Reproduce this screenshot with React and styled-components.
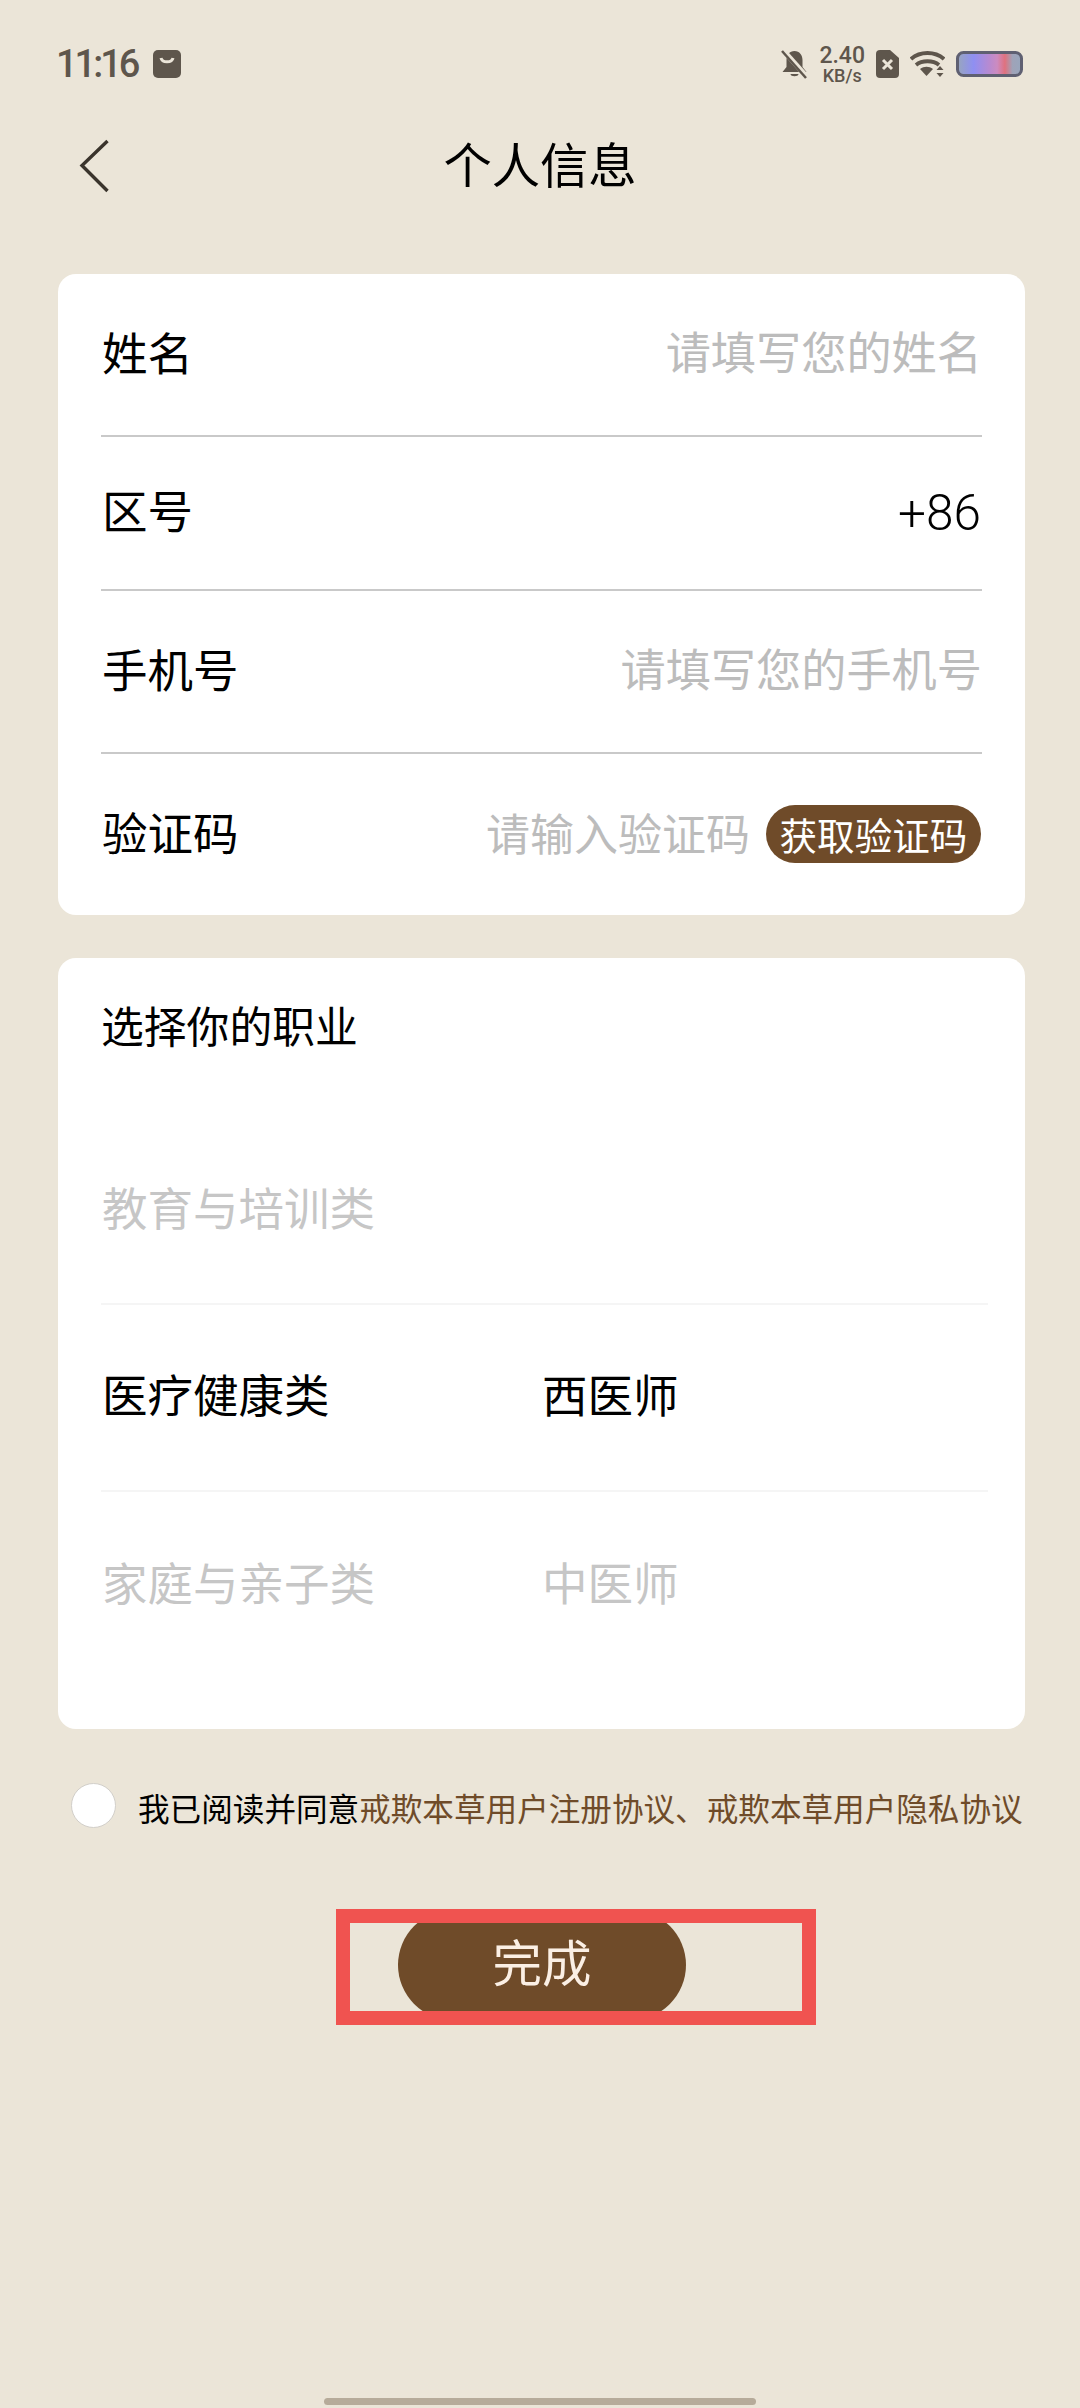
import React from "react";
import styled, { createGlobalStyle } from "styled-components";

const cjk = `"Noto Sans CJK SC", "Noto Sans", sans-serif`;

const GlobalStyle = createGlobalStyle`
  html, body {
    margin: 0;
    padding: 0;
    background: #ebe5d8;
    font-family: ${cjk};
  }
`;

const Page = styled.main`
  position: relative;
  width: 1080px;
  height: 2408px;
  overflow: hidden;
  background: #ebe5d8;
`;

const StatusBar = styled.header`
  height: 128px;
  box-sizing: border-box;
  padding: 0 57px 0 56px;
  display: flex;
  align-items: center;
  justify-content: space-between;
  color: #5e564c;
`;

const StatusGroup = styled.div`
  display: flex;
  align-items: center;
  gap: ${(p) => p.$gap || 16}px;
`;

const Clock = styled.span`
  font: 500 38px "Roboto", sans-serif;
  letter-spacing: -3px;
`;

const Speed = styled.span`
  display: flex;
  flex-direction: column;
  align-items: center;
  font: 500 23px/23px "Roboto", sans-serif;
  small {
    font-size: 18px;
    line-height: 18px;
  }
`;

const NavBar = styled.nav`
  position: relative;
  height: 74px;
  display: flex;
  align-items: center;
  justify-content: center;
  margin-bottom: 72px;
`;

const BackButton = styled.span`
  position: absolute;
  left: 79px;
  top: 11px;
  display: flex;
`;

const Title = styled.h1`
  margin: 0 0 6px;
  font-size: 48.3px;
  line-height: 68px;
  font-weight: 400;
  color: #000;
`;

const Card = styled.section`
  margin: 0 55px ${(p) => p.$bottom || 0}px 58px;
  background: #fff;
  border-radius: 18px;
  box-sizing: border-box;
  padding: 0 43px;
  height: ${(p) => p.$height}px;
`;

const FormRow = styled.div`
  height: ${(p) => p.$height}px;
  display: flex;
  align-items: center;
  justify-content: space-between;
  border-bottom: ${(p) => (p.$last ? "none" : "2px solid #c9c9c9")};
  box-sizing: border-box;
`;

const Label = styled.span`
  font-size: 45.5px;
  margin-bottom: 8px;
  margin-left: 1px;
  color: #000;
`;

const Value = styled.span`
  font-size: ${(p) => p.$size || 45.2}px;
  margin-bottom: ${(p) => (p.$size ? 5 : 8)}px;
  color: #bcbcbc;
`;

const AreaCode = styled.span`
  font: 300 49.5px "Roboto", sans-serif;
  margin-right: 1px;
  color: #000;
`;

const CodeField = styled.div`
  display: flex;
  align-items: center;
  gap: 16px;
`;

const CodeButton = styled.button`
  width: 215px;
  height: 58px;
  margin: 0 1px 2px 0;
  padding: 0;
  border: none;
  border-radius: 29px;
  background: #6f4b29;
  color: #fff;
  font: 400 37.6px/58px ${cjk};
`;

const SectionTitle = styled.h2`
  margin: 0;
  padding-top: 36px;
  height: 160px;
  box-sizing: border-box;
  font-size: 42.8px;
  line-height: 60px;
  font-weight: 400;
  color: #000;
`;

const JobRow = styled.div`
  height: 187px;
  display: grid;
  grid-template-columns: 440px 1fr;
  align-items: center;
  border-bottom: ${(p) => (p.$last ? "none" : "2px solid #f5f5f5")};
  box-sizing: border-box;
  margin-right: -6px;
`;

const JobText = styled.span`
  font-size: 45.5px;
  margin: 0 0 9px 1px;
  color: ${(p) => (p.$active ? "#000" : "#c6c6c6")};
`;

const Agreement = styled.div`
  display: flex;
  align-items: center;
  margin: 54px 0 0 71px;
  height: 44px;
`;

const Radio = styled.span`
  width: 45px;
  height: 45px;
  box-sizing: border-box;
  border-radius: 50%;
  border: 1px solid #d2cfca;
  background: #fff;
  margin-right: 22px;
  flex: none;
`;

const AgreementText = styled.span`
  font-size: 31.6px;
  line-height: 44px;
  padding-top: 3px;
  white-space: nowrap;
  color: #000;
  em {
    font-style: normal;
    color: #6f4b29;
  }
`;

const DoneButton = styled.button`
  display: block;
  width: 288px;
  height: 110px;
  margin: 83px 0 0 398px;
  padding: 0 0 8px;
  border: none;
  border-radius: 55px;
  background: #6f4b29;
  color: #fbefe4;
  font: 400 49.5px/100px ${cjk};
`;

/* annotation frame drawn over the screenshot */
const Highlight = styled.div`
  position: absolute;
  left: 336px;
  top: 1909px;
  width: 480px;
  height: 116px;
  box-sizing: border-box;
  border: 14px solid #f05350;
`;

const HomeBar = styled.div`
  position: absolute;
  left: 324px;
  bottom: 3px;
  width: 432px;
  height: 7px;
  border-radius: 4px;
  background: #b6ab9a;
`;

function BagIcon() {
  return (
    <svg width="28" height="28" viewBox="0 0 28 28">
      <rect width="28" height="28" rx="5" fill="#5e564c" />
      <path d="M8 8c1 5 11 5 12 0" fill="none" stroke="#ebe5d8" strokeWidth="3" />
    </svg>
  );
}

function BellOffIcon() {
  return (
    <svg width="27" height="30" viewBox="0 0 27 30">
      <path d="M13.5 2c5 0 8 4 8 9v7l4 5H1.5l4-5v-7c0-5 3-9 8-9zM9.5 25h8c0 3-8 3-8 0z" fill="#5e564c" />
      <path d="M2 1l24 27" stroke="#ebe5d8" strokeWidth="5" />
      <path d="M1 2l24 27" stroke="#5e564c" strokeWidth="2.5" />
    </svg>
  );
}

function SimIcon() {
  return (
    <svg width="23" height="28" viewBox="0 0 23 28">
      <path d="M4 0h10l9 8v16a4 4 0 0 1-4 4H4a4 4 0 0 1-4-4V4a4 4 0 0 1 4-4z" fill="#5e564c" />
      <path d="M7 10l9 9M16 10l-9 9" stroke="#ebe5d8" strokeWidth="3" />
    </svg>
  );
}

function WifiIcon() {
  return (
    <svg width="35" height="28" viewBox="0 0 35 28">
      <g fill="none" stroke="#5e564c" strokeWidth="3.8">
        <path d="M1 9c9-8 24-8 33 0" />
        <path d="M6 15c6-5 17-5 23 0" />
      </g>
      <path d="M10 19c4-3 9-3 13 0l-6.5 7z" fill="#5e564c" />
      <path d="M30 16l3.5 4h-7zM30 27l3.5-4h-7z" fill="#5e564c" />
    </svg>
  );
}

function BatteryIcon() {
  return (
    <svg width="67" height="26" viewBox="0 0 67 26">
      <defs>
        <linearGradient id="charge" x1="0" x2="1" y1="0" y2="0">
          <stop offset="0" stopColor="#98a6bd" />
          <stop offset="0.25" stopColor="#8f8ff2" />
          <stop offset="0.5" stopColor="#b88ad0" />
          <stop offset="0.62" stopColor="#cc8bc0" />
          <stop offset="0.74" stopColor="#e0717e" />
          <stop offset="0.86" stopColor="#9fa3b8" />
          <stop offset="1" stopColor="#98a6bd" />
        </linearGradient>
      </defs>
      <rect x="1.5" y="1.5" width="64" height="23" rx="6" fill="url(#charge)" stroke="#5f6072" strokeWidth="3" />
    </svg>
  );
}

function BackIcon() {
  return (
    <svg width="32" height="54" viewBox="0 0 32 54">
      <path d="M28.5 2L3 26.5 28.5 52" fill="none" stroke="#3a342c" strokeWidth="3.4" />
    </svg>
  );
}

export default function App() {
  return (
    <Page>
      <GlobalStyle />
      <StatusBar>
        <StatusGroup>
          <Clock>11:16</Clock>
          <BagIcon />
        </StatusGroup>
        <StatusGroup $gap={11}>
          <BellOffIcon />
          <Speed>
            2.40
            <small>KB/s</small>
          </Speed>
          <SimIcon />
          <WifiIcon />
          <BatteryIcon />
        </StatusGroup>
      </StatusBar>

      <NavBar>
        <BackButton>
          <BackIcon />
        </BackButton>
        <Title>个人信息</Title>
      </NavBar>

      <Card $height={641} $bottom={43}>
        <FormRow $height={163}>
          <Label>姓名</Label>
          <Value>请填写您的姓名</Value>
        </FormRow>
        <FormRow $height={154}>
          <Label>区号</Label>
          <AreaCode>+86</AreaCode>
        </FormRow>
        <FormRow $height={163}>
          <Label>手机号</Label>
          <Value>请填写您的手机号</Value>
        </FormRow>
        <FormRow $height={161} $last>
          <Label>验证码</Label>
          <CodeField>
            <Value $size={44}>请输入验证码</Value>
            <CodeButton>获取验证码</CodeButton>
          </CodeField>
        </FormRow>
      </Card>

      <Card $height={771}>
        <SectionTitle>选择你的职业</SectionTitle>
        <JobRow>
          <JobText>教育与培训类</JobText>
        </JobRow>
        <JobRow>
          <JobText $active>医疗健康类</JobText>
          <JobText $active>西医师</JobText>
        </JobRow>
        <JobRow $last>
          <JobText>家庭与亲子类</JobText>
          <JobText>中医师</JobText>
        </JobRow>
      </Card>

      <Agreement>
        <Radio />
        <AgreementText>
          我已阅读并同意<em>戒欺本草用户注册协议、戒欺本草用户隐私协议</em>
        </AgreementText>
      </Agreement>

      <DoneButton>完成</DoneButton>
      <Highlight />
      <HomeBar />
    </Page>
  );
}
